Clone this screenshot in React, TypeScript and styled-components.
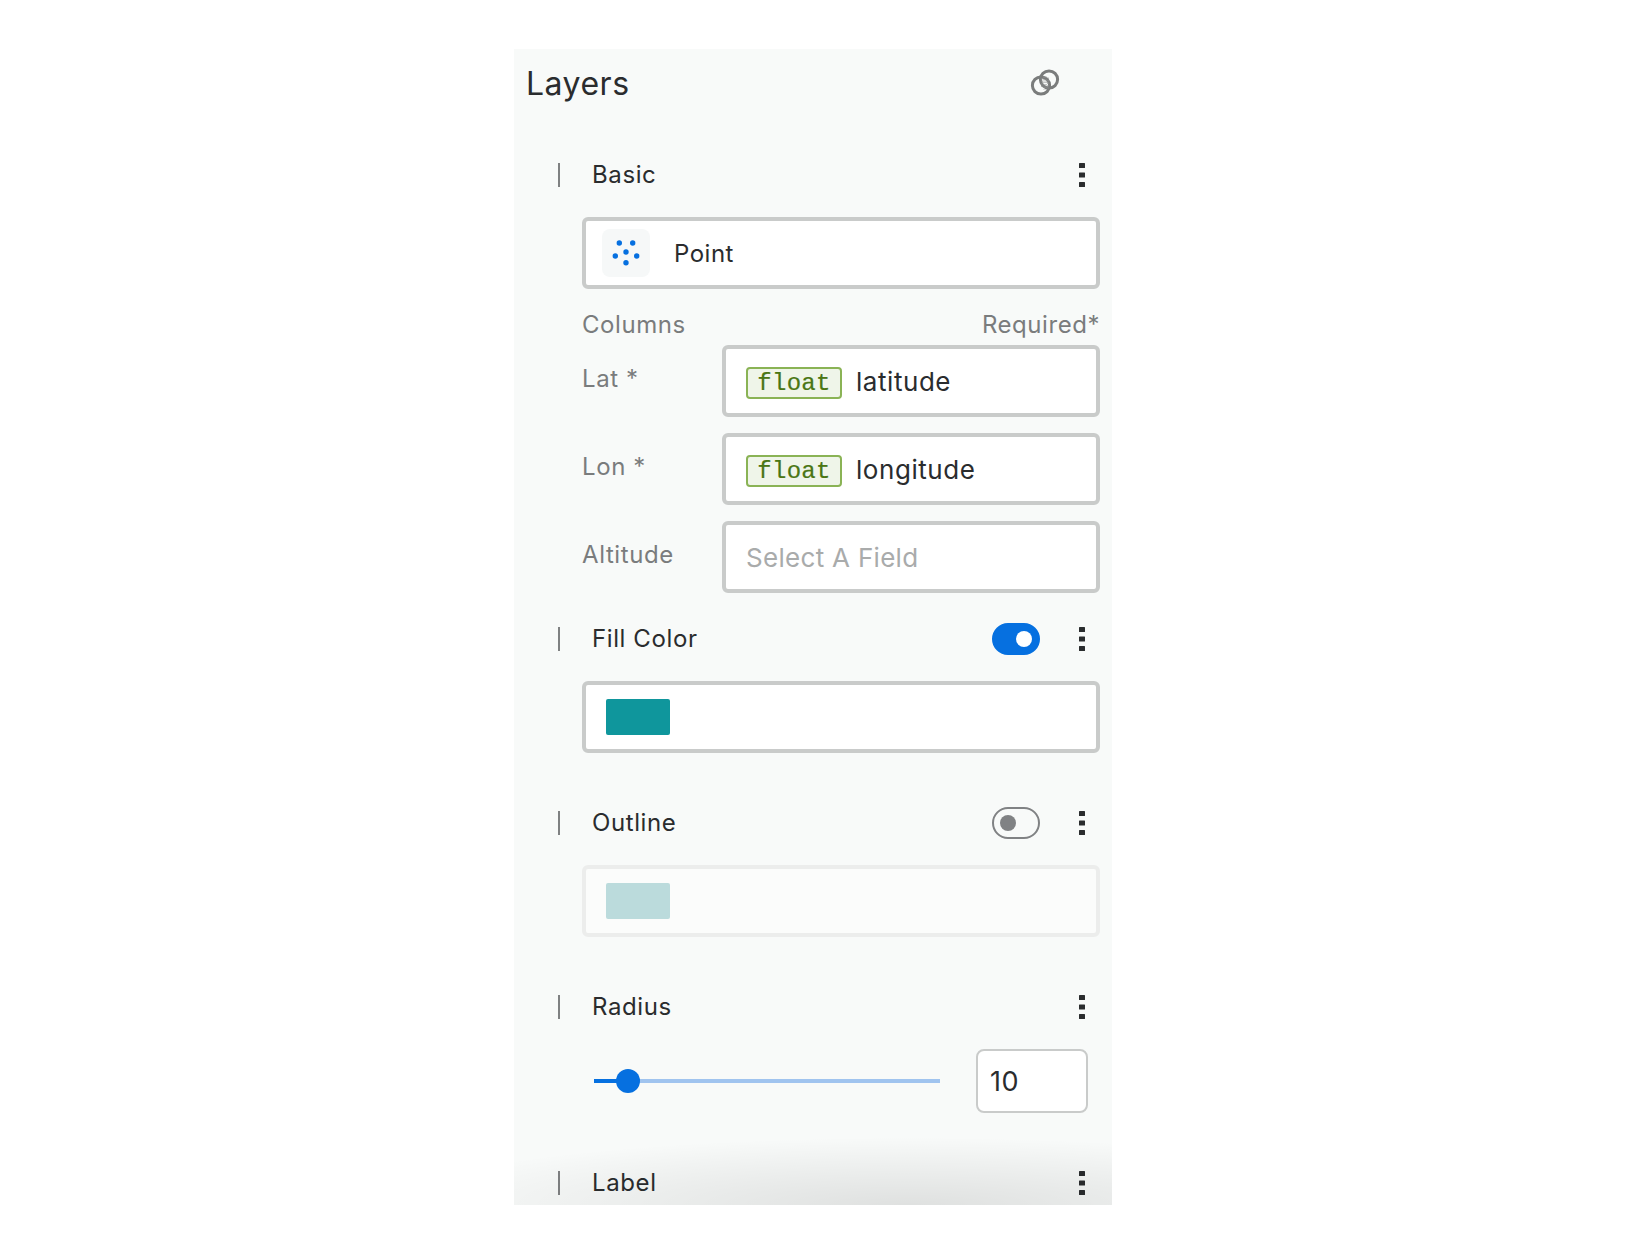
import React from "react";
import styled, { createGlobalStyle } from "styled-components";

const Global = createGlobalStyle`
  html, body { margin: 0; padding: 0; background: #fff; }
  body { font-family: Inter, "Noto Sans", sans-serif; color: #2a2c2e; }
`;

const Panel = styled.aside`
  position: relative;
  box-sizing: border-box;
  width: 598px;
  height: 1156px;
  margin: 49px 0 0 514px;
  background: #f8faf9;
  overflow: hidden;
`;

const TitleBar = styled.header`
  display: flex;
  align-items: center;
  justify-content: space-between;
  height: 68px;
  padding: 0 51px 0 12px;
  margin-bottom: 34px;
`;

const Title = styled.h1`
  margin: 0;
  font-size: 32px;
  font-weight: 400;
  letter-spacing: 0.5px;
  color: #2a2c2e;
`;

const Section = styled.section<{ $gap?: number }>`
  margin-bottom: ${(p) => p.$gap ?? 0}px;
`;

const SectionHeader = styled.div`
  display: flex;
  align-items: center;
  height: 48px;
  padding: 0 27px 0 44px;
  margin-bottom: 18px;
`;

const Handle = styled.span`
  width: 2px;
  height: 24px;
  background: #7f8182;
  margin-right: 32px;
`;

const SectionTitle = styled.span`
  flex: 1;
  padding-bottom: 2px;
  font-size: 24px;
  font-weight: 400;
  letter-spacing: 0.6px;
`;

const Toggle = styled.span<{ $on?: boolean }>`
  box-sizing: border-box;
  display: flex;
  align-items: center;
  justify-content: ${(p) => (p.$on ? "flex-end" : "flex-start")};
  width: 48px;
  height: 32px;
  padding: 0 6px;
  margin-right: 39px;
  border-radius: 16px;
  background: ${(p) => (p.$on ? "#0670e0" : "transparent")};
  border: 2px solid ${(p) => (p.$on ? "#0670e0" : "#808284")};

  &::after {
    content: "";
    width: 16px;
    height: 16px;
    border-radius: 50%;
    background: ${(p) => (p.$on ? "#fff" : "#808284")};
  }
`;

const Body = styled.div`
  margin: 0 12px 0 68px;
`;

const Field = styled.div<{ $muted?: boolean }>`
  box-sizing: border-box;
  display: flex;
  align-items: center;
  height: 72px;
  border: 4px solid ${(p) => (p.$muted ? "#ecedec" : "#c9cbca")};
  border-radius: 6px;
  background: ${(p) => (p.$muted ? "#fbfcfb" : "#fff")};
  font-size: 24px;
  letter-spacing: 0.5px;
`;

const TypeField = styled(Field)`
  padding-left: 16px;
`;

const TypeIcon = styled.span`
  display: flex;
  width: 48px;
  height: 48px;
  border-radius: 8px;
  background: #f6f8f8;
  margin-right: 24px;
`;

const ColumnsHead = styled.div`
  display: flex;
  align-items: center;
  justify-content: space-between;
  height: 56px;
  padding-top: 14px;
  box-sizing: border-box;
  font-size: 24px;
  letter-spacing: 0.55px;
  color: #7a7c7d;
`;

const ColumnRow = styled.div`
  display: flex;
  margin-bottom: 16px;
  &:last-child { margin-bottom: 0; }
`;

const ColumnLabel = styled.label`
  width: 140px;
  padding-top: 19px;
  font-size: 24px;
  letter-spacing: 0.6px;
  color: #7a7c7d;
`;

const ColumnField = styled(Field)`
  flex: 1;
  padding-left: 20px;
  font-size: 26px;
  letter-spacing: 0.55px;
`;

const Chip = styled.span`
  box-sizing: border-box;
  display: flex;
  align-items: center;
  justify-content: center;
  width: 96px;
  height: 32px;
  margin: 4px 14px 0 0;
  padding-top: 2px;
  border: 2px solid #8ab355;
  border-radius: 4px;
  background: #eff5e9;
  color: #4a7614;
  font-family: "Liberation Mono", monospace;
  font-size: 24px;
  letter-spacing: 0.3px;
  line-height: 1;
  -webkit-text-stroke: 0.2px #4a7614;
`;

const Placeholder = styled.span`
  color: #a9abab;
  letter-spacing: 0.3px;
`;

const Swatch = styled.span<{ $color: string }>`
  width: 64px;
  height: 36px;
  margin-left: 20px;
  border-radius: 2px;
  background: ${(p) => p.$color};
`;

const SliderRow = styled.div`
  display: flex;
  align-items: center;
  height: 64px;
  padding: 0 24px 0 80px;
`;

const Track = styled.div`
  position: relative;
  width: 346px;
  height: 4px;
  margin-right: 36px;
  background: #a0c4ef;
`;

const TrackFill = styled.div`
  height: 100%;
  background: #0670e0;
`;

const Thumb = styled.span`
  position: absolute;
  top: -10px;
  width: 24px;
  height: 24px;
  margin-left: -12px;
  border-radius: 50%;
  background: #0670e0;
`;

const NumberBox = styled.div`
  box-sizing: border-box;
  display: flex;
  align-items: center;
  width: 112px;
  height: 64px;
  padding-left: 12px;
  border: 2px solid #c9cbca;
  border-radius: 8px;
  background: #fff;
  font-size: 27px;
  letter-spacing: 0.6px;
`;

const BottomShade = styled.div`
  position: absolute;
  left: 0;
  right: 0;
  bottom: 0;
  height: 68px;
  pointer-events: none;
  background: radial-gradient(ellipse 88% 100% at 66% 100%, rgba(0, 0, 0, 0.1), rgba(0, 0, 0, 0));
`;

const KebabSvg = styled.svg`
  display: block;
  flex: none;
`;

const Kebab = () => (
  <KebabSvg width="6" height="24" viewBox="0 0 6 24" fill="#2a2c2e">
    <rect y="0" width="6" height="5" rx="0.5" />
    <rect y="9.5" width="6" height="5" rx="0.5" />
    <rect y="19" width="6" height="5" rx="0.5" />
  </KebabSvg>
);

const LinkIcon = () => (
  <svg width="32" height="32" viewBox="0 0 32 32" fill="none">
    <circle cx="12" cy="18.5" r="8.6" stroke="#7a7c7c" strokeWidth="3" />
    <circle cx="20" cy="12.5" r="8.6" stroke="#7a7c7c" strokeWidth="3" />
    <g stroke="#8f9191" strokeWidth="1" strokeDasharray="1.5 1">
      <path d="M13 11v10M15 9.5v13M17 9.5v13M19 10.5v11" />
    </g>
  </svg>
);

const PointIcon = () => (
  <svg width="48" height="48" viewBox="-24 -24 48 48" fill="#0670e0">
    <circle cx="-6.7" cy="-10" r="2.7" />
    <circle cx="6.7" cy="-10" r="2.7" />
    <circle cx="0" cy="-1" r="2.7" />
    <circle cx="-10.7" cy="3" r="2.7" />
    <circle cx="10.7" cy="3" r="2.7" />
    <circle cx="0" cy="9.7" r="2.7" />
  </svg>
);

const columns = [
  { label: "Lat *", field: "latitude" },
  { label: "Lon *", field: "longitude" },
  { label: "Altitude", field: "" },
];

const Header = ({ title, toggle }: { title: string; toggle?: "on" | "off" }) => (
  <SectionHeader>
    <Handle />
    <SectionTitle>{title}</SectionTitle>
    {toggle && <Toggle $on={toggle === "on"} />}
    <Kebab />
  </SectionHeader>
);

export default function App() {
  const sliderPct = (34 / 346) * 100;
  return (
    <>
      <Global />
      <Panel>
        <TitleBar>
          <Title>Layers</Title>
          <LinkIcon />
        </TitleBar>

        <Section $gap={22}>
          <Header title="Basic" />
          <Body>
            <TypeField>
              <TypeIcon>
                <PointIcon />
              </TypeIcon>
              Point
            </TypeField>
            <ColumnsHead>
              <span>Columns</span>
              <span>Required*</span>
            </ColumnsHead>
            {columns.map((c) => (
              <ColumnRow key={c.label}>
                <ColumnLabel>{c.label}</ColumnLabel>
                <ColumnField>
                  {c.field ? (
                    <>
                      <Chip>float</Chip>
                      {c.field}
                    </>
                  ) : (
                    <Placeholder>Select A Field</Placeholder>
                  )}
                </ColumnField>
              </ColumnRow>
            ))}
          </Body>
        </Section>

        <Section $gap={46}>
          <Header title="Fill Color" toggle="on" />
          <Body>
            <Field>
              <Swatch $color="#0f969c" />
            </Field>
          </Body>
        </Section>

        <Section $gap={46}>
          <Header title="Outline" toggle="off" />
          <Body>
            <Field $muted>
              <Swatch $color="#bbdbdc" />
            </Field>
          </Body>
        </Section>

        <Section $gap={46}>
          <Header title="Radius" />
          <SliderRow>
            <Track>
              <TrackFill style={{ width: `${sliderPct}%` }} />
              <Thumb style={{ left: `${sliderPct}%` }} />
            </Track>
            <NumberBox>10</NumberBox>
          </SliderRow>
        </Section>

        <Section>
          <Header title="Label" />
        </Section>

        <BottomShade />
      </Panel>
    </>
  );
}
